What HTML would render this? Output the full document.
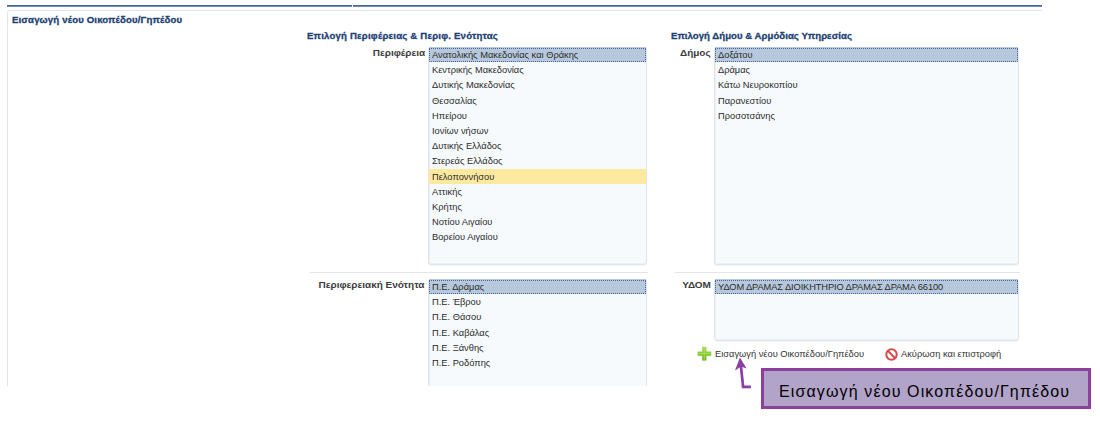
<!DOCTYPE html>
<html><head><meta charset="utf-8">
<style>
html,body{margin:0;padding:0;background:#fff;width:1100px;height:441px;overflow:hidden;position:relative;font-family:"Liberation Sans",sans-serif;}
.a{position:absolute;white-space:nowrap;}
.line1{left:7px;top:5px;height:2px;background:linear-gradient(#46669b 0 50%,#7089b3 50% 100%);}
.pl{left:7px;top:10px;width:1035px;height:376px;border-left:1px solid #e2e7ee;border-top:1px solid #dfe5ec;border-top-left-radius:3px;box-sizing:border-box;}
.ttl{font-weight:bold;color:#1c4172;font-size:9.6px;line-height:1;letter-spacing:0.2px;-webkit-text-stroke:0.3px #1c4172;}
.lbl{font-weight:bold;color:#3b3b3b;font-size:9px;line-height:1;text-align:right;transform-origin:100% 0;transform:scaleX(1.11);}
.lb{border:1px solid #e0e5ea;border-radius:3px;background:#f6fafd;box-sizing:border-box;box-shadow:inset 1px 0 0 #edf1f5,inset 0 -1px 0 #edf1f5,0 1px 0 #f4f6f8;}
.it{position:absolute;left:0;right:0;height:15.2px;font-size:9.3px;color:#2b2b2b;padding-left:3px;padding-top:1px;box-sizing:border-box;line-height:14.4px;}
.sel{background:#b7c8dd;height:15px;}
.sel::after{content:"";position:absolute;left:0;right:0;top:1px;bottom:0;border:1px dotted #46669b;box-sizing:border-box;}
.hl{background:#fdea9f;}
.sep{height:1px;background:#e1e6ec;}
</style></head><body>
<div class="a line1" style="width:345px"></div>
<div class="a line1" style="left:353px;width:689px"></div>
<div class="a pl"></div>

<div class="a ttl" style="left:12px;top:15px;letter-spacing:0.15px"><span class="m">Εισαγωγή νέου Οικοπέδου/Γηπέδου</span></div>
<div class="a ttl" style="left:307px;top:30.7px"><span class="m">Επιλογή Περιφέρειας &amp; Περιφ. Ενότητας</span></div>
<div class="a ttl" style="left:671px;top:30.7px;letter-spacing:0.04px"><span class="m">Επιλογή Δήμου &amp; Αρμόδιας Υπηρεσίας</span></div>

<div class="a lbl" style="right:675px;top:48.6px"><span class="m">Περιφέρεια</span></div>
<div class="a lbl" style="right:389px;top:48.6px"><span class="m">Δήμος</span></div>
<div class="a lbl" style="right:675px;top:280.5px"><span class="m">Περιφερειακή Ενότητα</span></div>
<div class="a lbl" style="right:389px;top:280.5px"><span class="m">ΥΔΟΜ</span></div>

<div class="a lb" style="left:428px;top:47px;width:219px;height:218px">
 <div class="it sel" style="top:-1px"><span class="m">Ανατολικής Μακεδονίας και Θράκης</span></div>
 <div class="it" style="top:14.2px">Κεντρικής Μακεδονίας</div>
 <div class="it" style="top:29.4px">Δυτικής Μακεδονίας</div>
 <div class="it" style="top:44.6px">Θεσσαλίας</div>
 <div class="it" style="top:59.8px">Ηπείρου</div>
 <div class="it" style="top:75px">Ιονίων νήσων</div>
 <div class="it" style="top:90.2px">Δυτικής Ελλάδος</div>
 <div class="it" style="top:105.4px">Στερεάς Ελλάδος</div>
 <div class="it hl" style="top:120.6px"><span class="m">Πελοποννήσου</span></div>
 <div class="it" style="top:135.8px">Αττικής</div>
 <div class="it" style="top:151px">Κρήτης</div>
 <div class="it" style="top:166.2px">Νοτίου Αιγαίου</div>
 <div class="it" style="top:181.4px"><span class="m">Βορείου Αιγαίου</span></div>
</div>

<div class="a lb" style="left:714px;top:47px;width:305px;height:218px">
 <div class="it sel" style="top:-1px">Δοξάτου</div>
 <div class="it" style="top:14.2px">Δράμας</div>
 <div class="it" style="top:29.4px">Κάτω Νευροκοπίου</div>
 <div class="it" style="top:44.6px">Παρανεστίου</div>
 <div class="it" style="top:59.8px">Προσοτσάνης</div>
</div>

<div class="a sep" style="left:310px;top:272px;width:338px"></div>
<div class="a sep" style="left:675px;top:272px;width:345px"></div>

<div class="a lb" style="left:428px;top:279px;width:219px;height:130px">
 <div class="it sel" style="top:-1px">Π.Ε. Δράμας</div>
 <div class="it" style="top:14.2px">Π.Ε. Έβρου</div>
 <div class="it" style="top:29.4px">Π.Ε. Θάσου</div>
 <div class="it" style="top:44.6px">Π.Ε. Καβάλας</div>
 <div class="it" style="top:59.8px">Π.Ε. Ξάνθης</div>
 <div class="it" style="top:75px">Π.Ε. Ροδόπης</div>
</div>

<div class="a lb" style="left:714px;top:279px;width:305px;height:62px">
 <div class="it sel" style="top:-1px"><span class="m" style="letter-spacing:-0.11px">ΥΔΟΜ ΔΡΑΜΑΣ ΔΙΟΙΚΗΤΗΡΙΟ ΔΡΑΜΑΣ ΔΡΑΜΑ 66100</span></div>
</div>

<!-- white cover below panel -->
<div class="a" style="left:0;top:386px;width:1100px;height:55px;background:#fff"></div>

<!-- buttons -->
<svg class="a" style="left:697px;top:346px" width="15" height="16" viewBox="0 0 15 16">
 <defs><linearGradient id="g1" x1="0" y1="0" x2="0" y2="1"><stop offset="0" stop-color="#a4dc4c"/><stop offset="1" stop-color="#6cb81e"/></linearGradient></defs>
 <path d="M5.2 1h4.2v4.6h4.8v4.3H9.4v4.7H5.2V9.9H0.6V5.6h4.6z" fill="#e8f2dc" transform="translate(0 0.8)" opacity="0.6"/>
 <path d="M5.2 0.8h4.2v4.6h4.8v4.3H9.4v4.7H5.2V9.7H0.6V5.4h4.6z" fill="url(#g1)"/>
 <path d="M7.3 1.5v12.3M1.3 7.55h12.2" stroke="#c9ef8e" stroke-width="0.7" opacity="0.7"/>
</svg>
<div class="a" style="left:715px;top:349.5px;font-size:9.3px;line-height:1;color:#333"><span class="m">Εισαγωγή νέου Οικοπέδου/Γηπέδου</span></div>
<svg class="a" style="left:885px;top:348px" width="13" height="13" viewBox="0 0 13 13">
 <circle cx="6.5" cy="6.5" r="5.2" fill="none" stroke="#d94b4b" stroke-width="2"/>
 <path d="M2.8 2.8L10.2 10.2" stroke="#d94b4b" stroke-width="2"/>
</svg>
<div class="a" style="left:901px;top:349.5px;font-size:9.3px;line-height:1;color:#333"><span class="m">Ακύρωση και επιστροφή</span></div>

<!-- callout -->
<div class="a" style="left:761px;top:368px;width:330px;height:41px;box-sizing:border-box;border:3px solid #8d3f9c;background:#b2a3c9"></div>
<div class="a" style="left:779px;top:383.7px;font-size:16px;line-height:1;color:#000;letter-spacing:1.12px"><span class="m">Εισαγωγή νέου Οικοπέδου/Γηπέδου</span></div>
<svg class="a" style="left:730px;top:354px" width="30" height="40" viewBox="0 0 30 40">
 <path d="M10.9 12L13.1 32.6" fill="none" stroke="#8b3f9f" stroke-width="2.7"/>
 <path d="M11.8 32.9H20.9" fill="none" stroke="#8b3f9f" stroke-width="2.8"/>
 <path d="M9.9 3.6L16.6 14.6L11.2 12.4L5 16.4z" fill="#8b3f9f"/>
</svg>
</body></html>
